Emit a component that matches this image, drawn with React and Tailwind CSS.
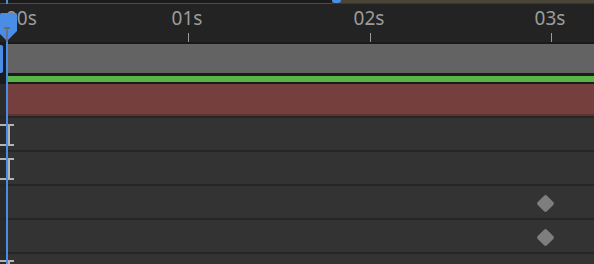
const ticks = [
  { label: '01s', x: 188 },
  { label: '02s', x: 370 },
  { label: '03s', x: 551 },
]

const Gutter = ({ className = 'bg-[#2a2a2a]', children }) => (
  <div className={`relative w-[6px] shrink-0 ${className}`}>{children}</div>
)

const InMarker = () => (
  <div className="absolute left-0 top-[6px] h-[22px] w-[14px]">
    <div className="absolute left-0 top-0 h-[2px] w-[14px] bg-[#b4b4b4]" />
    <div className="absolute left-[8px] top-0 h-[22px] w-[2px] bg-[#b4b4b4]" />
    <div className="absolute left-0 bottom-0 h-[2px] w-[14px] bg-[#b4b4b4]" />
  </div>
)

const Keyframe = () => (
  <div className="absolute left-[538.5px] top-[10.5px] h-[13px] w-[13px] rotate-45 rounded-[2px] bg-[#7e7e7e]" />
)

const tracks = [
  { marker: true },
  { marker: true },
  { key: true },
  { key: true },
  { marker: true },
]

export default function App() {
  return (
    <div className="relative h-[264px] w-[594px] overflow-hidden bg-[#333333] font-['Noto_Sans',sans-serif]">
      {/* top strip / work area */}
      <div className="flex h-[4px]">
        <div className="w-[332px] border-b border-[#4c4c4c] bg-[#1b1b1b]" />
        <div className="relative flex-1 border-b border-[#3a372f] bg-[#4b4538]">
          <div className="absolute left-0 top-0 h-[3px] w-[9px] rounded-b-full bg-[#4a8de6]" />
        </div>
      </div>

      {/* ruler */}
      <div className="relative h-[38px] bg-[#232323] text-[19px] leading-[19px] text-[#9c9c9c]">
        <span className="absolute left-[6px] top-[4.5px]">00s</span>
        {ticks.map((t) => (
          <div key={t.label}>
            <span className="absolute top-[4.5px] w-[40px] -translate-x-1/2 text-center" style={{ left: t.x - 1 }}>
              {t.label}
            </span>
            <div className="absolute bottom-0 h-[9px] w-px bg-[#9a9a9a]" style={{ left: t.x }} />
          </div>
        ))}
      </div>
      <div className="h-[2px] bg-[#1a1a1a]" />

      {/* work area bar */}
      <div className="flex h-[29px]">
        <Gutter className="bg-[#1e1e1e]">
          <div className="absolute left-0 top-[1px] h-[28px] w-[3px] rounded-r-[2px] bg-[#4a8de6]" />
        </Gutter>
        <div className="flex-1 bg-[#636363]" />
      </div>
      <div className="h-[3px] bg-[#1c1c1c]" />
      <div className="flex h-[6px]">
        <Gutter className="bg-[#1c1c1c]" />
        <div className="flex-1 bg-[#56b545]" />
      </div>
      <div className="h-[2px] bg-[#1c1c1c]" />

      {/* layer bar */}
      <div className="flex h-[30px]">
        <Gutter className="bg-[#2c2c2c]" />
        <div className="flex-1 bg-[#743f3c]" />
      </div>
      <div className="flex h-[2px]">
        <Gutter className="bg-[#2a2a2a]" />
        <div className="flex-1 bg-[#5f3331]" />
      </div>

      {/* property tracks */}
      {tracks.map((t, i) => (
        <div key={i} className="flex h-[34px] flex-col">
          <div className="h-[2px] bg-[#262626]" />
          <div className="relative flex flex-1">
            <Gutter />
            <div className="flex-1" />
            {t.marker && <InMarker />}
            {t.key && <Keyframe />}
          </div>
        </div>
      ))}

      {/* playhead */}
      <div className="absolute left-[6px] top-0 h-[4px] w-[2px] bg-[#4a8de6]" />
      <div className="absolute bottom-0 left-[6px] top-[40px] w-[2px] bg-[#4a8de6]" />
      <svg className="absolute left-0 top-[13px]" width="18" height="29" viewBox="0 0 18 29">
        <path d="M0 1.5 Q0 0 1.5 0 H15.5 Q17 0 17 1.5 V18 L7 28 L0 21 Z" fill="#4a8de6" />
        <path d="M4 15 H10" stroke="#6b6b6b" strokeWidth="2" />
        <path d="M7 15 V29" stroke="#6b6b6b" strokeWidth="1.5" />
      </svg>
    </div>
  )
}
